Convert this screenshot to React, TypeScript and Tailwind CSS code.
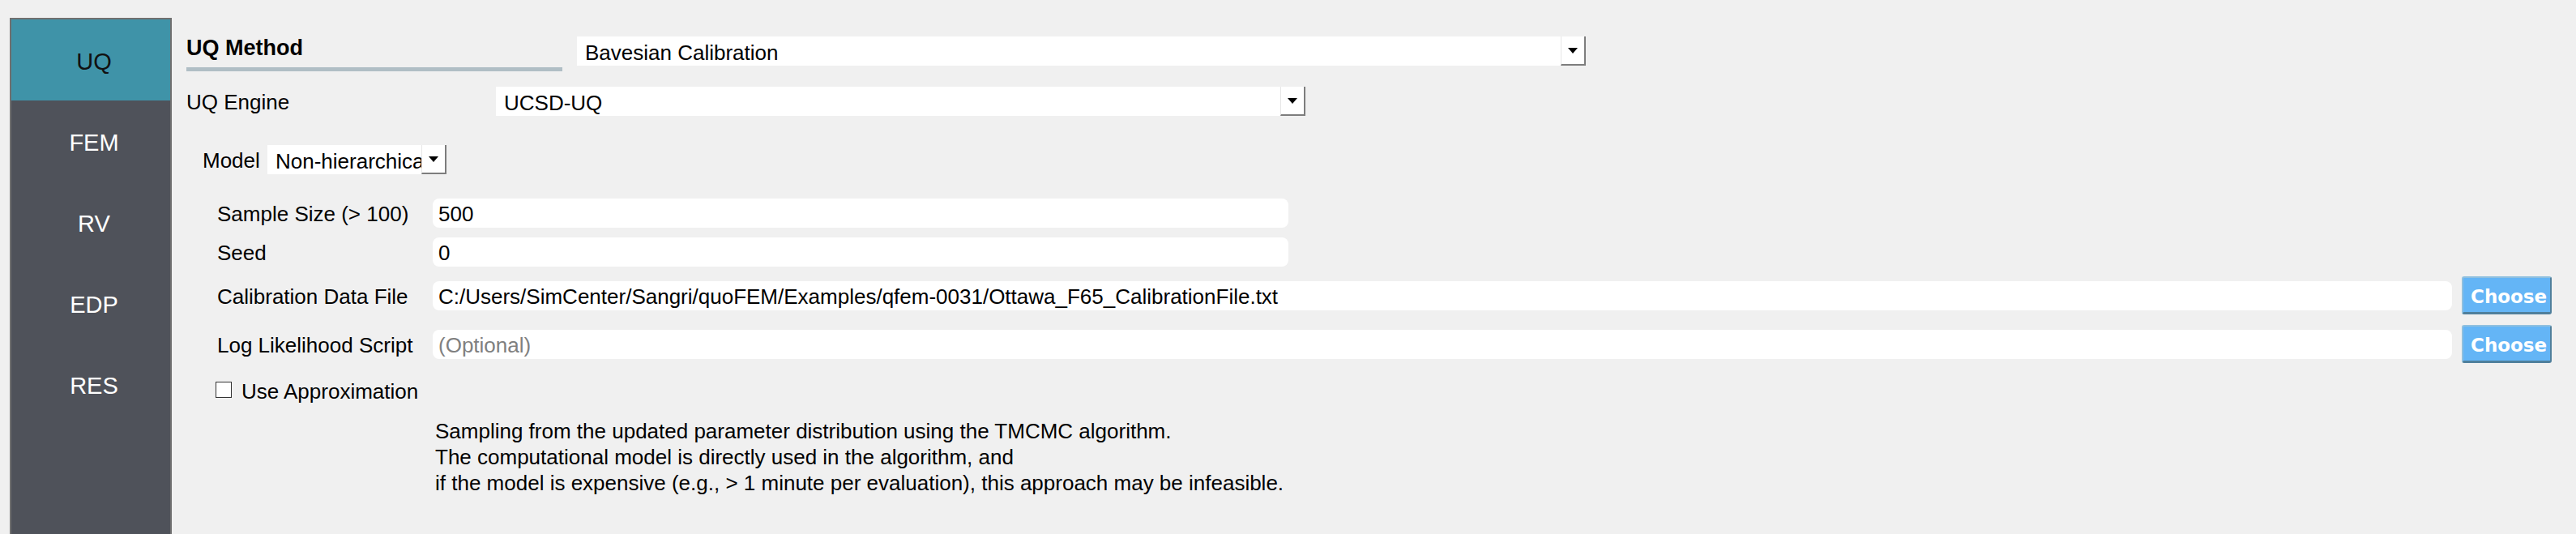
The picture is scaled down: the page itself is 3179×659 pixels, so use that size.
import React from "react";

const tabs = ["UQ", "FEM", "RV", "EDP", "RES"];

function Arrow() {
  return (
    <div className="flex w-[31px] shrink-0 items-center justify-center border-l border-l-[#e6e6e6] border-r-2 border-b-2 border-r-[#7d7d7d] border-b-[#7d7d7d]">
      <div className="h-0 w-0 border-l-[6px] border-r-[6px] border-t-[7px] border-l-transparent border-r-transparent border-t-black" />
    </div>
  );
}

function Combo({ value, className }: { value: string; className: string }) {
  return (
    <div className={`flex h-[36px] bg-white ${className}`}>
      <div className="flex-1 overflow-hidden whitespace-nowrap pl-[10px] pt-[4px] text-[26px] leading-[32px] text-black">
        {value}
      </div>
      <Arrow />
    </div>
  );
}

function Field({
  label,
  value,
  placeholder,
  inputClass,
  choose,
  rowClass,
}: {
  label: string;
  value?: string;
  placeholder?: string;
  inputClass: string;
  choose?: boolean;
  rowClass: string;
}) {
  return (
    <div className={`flex items-center pl-[38px] ${rowClass}`}>
      <div className="h-[36px] w-[266px] shrink-0 pt-[3px] text-[26px] leading-[33px] text-black">
        {label}
      </div>
      <div
        className={`h-[36px] shrink-0 rounded-[8px] bg-white pl-[7px] pt-[3px] text-[26px] leading-[33px] ${inputClass}`}
      >
        {value ? (
          <span className="text-black">{value}</span>
        ) : (
          <span className="text-[#808080]">{placeholder}</span>
        )}
      </div>
      {choose && (
        <button className="ml-[12px] h-[47px] w-[111px] shrink-0 rounded-[3px] border-t-2 border-l-2 border-r-2 border-b-[3px] border-t-[#8fc0df] border-l-[#8fc0df] border-r-[#4f7f9c] border-b-[#4f7f9c] bg-[#64b5f6] pl-[9px] pt-[3px] text-left font-['DejaVu_Sans',Verdana,sans-serif] text-[23px] font-bold leading-[36px] text-white">
          Choose
        </button>
      )}
    </div>
  );
}

export default function App() {
  return (
    <div className="flex h-[659px] w-full overflow-hidden bg-[#f0f0f0] font-['Liberation_Sans',Arial,sans-serif]">
      <div className="flex shrink-0 flex-col pl-[12px] pt-[22px]">
        <div className="flex w-[200px] flex-1 flex-col border-l-2 border-t-2 border-r-2 border-[#707070] bg-[#4f525a]">
          {tabs.map((t, i) => (
            <div
              key={t}
              className={
                i === 0
                  ? "flex h-[100px] items-center justify-center bg-[#3f93a8] pl-[8px] pt-[6px] text-[29px] text-[#111111]"
                  : "flex h-[100px] items-center justify-center pl-[8px] pt-[6px] text-[29px] text-white"
              }
            >
              {t}
            </div>
          ))}
        </div>
      </div>

      <div className="flex flex-1 flex-col pl-[18px] pt-[40px]">
        <div className="flex items-start">
          <div className="flex w-[464px] shrink-0 flex-col">
            <div className="mt-[3px] text-[27px] font-bold leading-[32px] text-black">UQ Method</div>
            <div className="mt-[8px] h-[5px] bg-[#b0bec5]" />
          </div>
          <Combo value="Bavesian Calibration" className="ml-[18px] mt-[5px] w-[1245px]" />
        </div>

        <div className="mt-[19px] flex items-center">
          <div className="h-[36px] w-[382px] shrink-0 pt-[3px] text-[26px] leading-[33px] text-black">
            UQ Engine
          </div>
          <Combo value="UCSD-UQ" className="w-[999px]" />
        </div>

        <div className="mt-[36px] flex items-center pl-[20px]">
          <div className="h-[36px] w-[80px] shrink-0 pt-[3px] text-[26px] leading-[33px] text-black">
            Model
          </div>
          <Combo value="Non-hierarchical" className="w-[221px]" />
        </div>

        <Field label="Sample Size (> 100)" value="500" inputClass="w-[1056px]" rowClass="mt-[30px]" />
        <Field label="Seed" value="0" inputClass="w-[1056px]" rowClass="mt-[12px]" />
        <Field
          label="Calibration Data File"
          value="C:/Users/SimCenter/Sangri/quoFEM/Examples/qfem-0031/Ottawa_F65_CalibrationFile.txt"
          inputClass="w-[2492px]"
          choose
          rowClass="mt-[12px]"
        />
        <Field
          label="Log Likelihood Script"
          placeholder="(Optional)"
          inputClass="w-[2492px]"
          choose
          rowClass="mt-[13px]"
        />

        <div className="mt-[17px] flex h-[32px] items-center pl-[36px]">
          <div className="h-[20px] w-[20px] shrink-0 border border-[#333333] bg-white" />
          <div className="ml-[12px] pt-[4px] text-[26px] leading-[28px] text-black">Use Approximation</div>
        </div>

        <div className="mt-[19px] pl-[307px] text-[26px] leading-[32px] text-black">
          <div>Sampling from the updated parameter distribution using the TMCMC algorithm.</div>
          <div>The computational model is directly used in the algorithm, and</div>
          <div>if the model is expensive (e.g., &gt; 1 minute per evaluation), this approach may be infeasible.</div>
        </div>
      </div>
    </div>
  );
}
